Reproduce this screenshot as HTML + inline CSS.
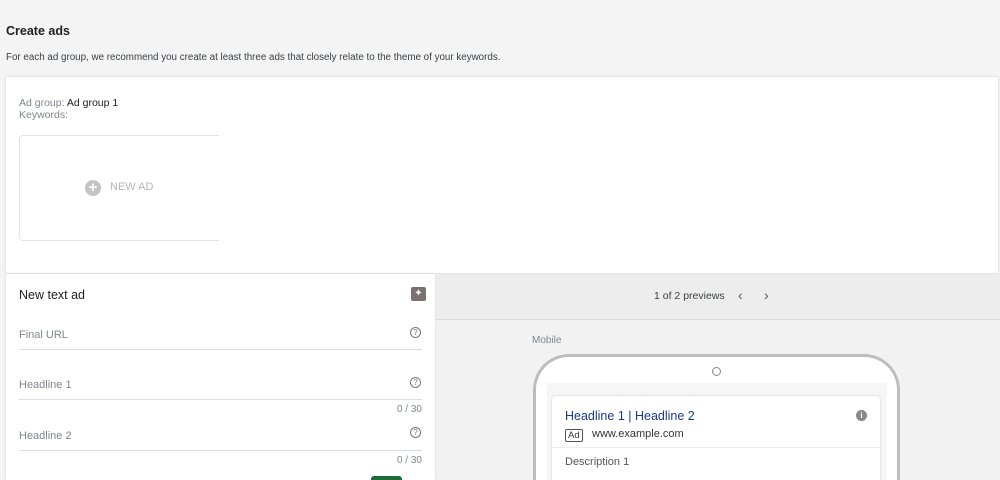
<!DOCTYPE html>
<html style="width:1000px;height:480px;overflow:hidden"><head><style>
*{margin:0;padding:0;box-sizing:border-box}
body{width:1000px;height:480px;overflow:hidden;background:#f4f4f4;font-family:"Liberation Sans",sans-serif;position:relative;color:#202124}
.a{position:absolute}
.lbl{font-size:11px;color:#80868b}
.line{height:1px;background:#dadce0;left:19px;width:403px}
.q{width:11px;height:11px;border:1.2px solid #777;border-radius:50%;font-size:8px;line-height:9px;text-align:center;color:#777;left:410px}
.cnt{font-size:10px;color:#80868b;right:578px}
</style></head><body>
<div class="a" style="left:6px;top:24px;font-size:12.5px;font-weight:bold;color:#202124">Create ads</div>
<div class="a" style="left:6px;top:52px;font-size:9.8px;color:#3c4043">For each ad group, we recommend you create at least three ads that closely relate to the theme of your keywords.</div>
<div class="a" style="left:6px;top:77px;width:992px;height:196px;background:#fff;box-shadow:0 0 2px #ccc"></div>
<div class="a" style="left:19px;top:97px;font-size:10.5px;color:#80868b;line-height:12px">Ad group: <span style="color:#202124">Ad group 1</span><br>Keywords:</div>
<div class="a" style="left:19px;top:135px;width:200px;height:106px;border:1px solid #e3e3e3;border-right:none;border-radius:4px 0 0 4px"></div>
<div class="a" style="left:85px;top:180px;width:16px;height:16px;border-radius:50%;background:#c4c4c4;color:#fff;font-size:15px;line-height:15px;text-align:center;font-weight:bold">+</div>
<div class="a" style="left:110px;top:181px;font-size:11px;color:#b5b5b5">NEW AD</div>
<div class="a" style="left:6px;top:274px;width:429px;height:206px;background:#fff;box-shadow:0 0 2px #ccc"></div>
<div class="a" style="left:19px;top:288px;font-size:12.5px;color:#202124">New text ad</div>
<div class="a" style="left:411px;top:287px;width:15px;height:14px;background:#7a7270;border-radius:2px;color:#fff;font-size:10px;text-align:center;line-height:14px">✦</div>
<div class="a lbl" style="left:19px;top:329px">Final URL</div><div class="a q" style="top:327px">?</div>
<div class="a line" style="top:349px"></div>
<div class="a lbl" style="left:19px;top:379px">Headline 1</div><div class="a q" style="top:377px">?</div>
<div class="a line" style="top:399px"></div>
<div class="a cnt" style="top:404px">0 / 30</div>
<div class="a lbl" style="left:19px;top:430px">Headline 2</div><div class="a q" style="top:427px">?</div>
<div class="a line" style="top:450px"></div>
<div class="a cnt" style="top:455px">0 / 30</div>
<div class="a" style="left:371px;top:476px;width:31px;height:4px;background:#1e6b3a;border-radius:3px 3px 0 0"></div>
<div class="a" style="left:436px;top:274px;width:564px;height:46px;background:#ededed;border-bottom:1px solid #ddd"></div>
<div class="a" style="left:436px;top:321px;width:564px;height:159px;background:#f2f2f2"></div>
<div class="a" style="left:654px;top:290px;font-size:10.5px;color:#3c4043">1 of 2 previews</div>
<div class="a" style="left:738px;top:287px;font-size:14px;color:#555">‹</div>
<div class="a" style="left:764px;top:287px;font-size:14px;color:#555">›</div>
<div class="a" style="left:532px;top:335px;font-size:10px;color:#80868b">Mobile</div>
<div class="a" style="left:533px;top:354px;width:367px;height:126px;border:3px solid #bdbdbd;border-bottom:none;border-radius:36px 36px 0 0;background:#fff"></div>
<div class="a" style="left:712px;top:367px;width:9px;height:9px;border:1px solid #888;border-radius:50%"></div>
<div class="a" style="left:547px;top:383px;width:340px;height:97px;background:#f6f6f6"></div>
<div class="a" style="left:552px;top:396px;width:328px;height:84px;background:#fff;border-radius:4px 4px 0 0;box-shadow:0 0 2px #ccc"></div>
<div class="a" style="left:565px;top:409px;font-size:12.5px;color:#1a3a8a">Headline 1 | Headline 2</div>
<div class="a" style="left:856px;top:410px;width:11px;height:11px;border-radius:50%;background:#888;color:#fff;font-size:8px;text-align:center;line-height:11px;font-weight:bold">i</div>
<div class="a" style="left:565px;top:429px;border:1px solid #555;border-radius:2px;font-size:9.5px;padding:0 2px;line-height:11px;color:#333">Ad</div>
<div class="a" style="left:592px;top:428px;font-size:11px;color:#333">www.example.com</div>
<div class="a" style="left:552px;top:447px;width:328px;height:1px;background:#eee"></div>
<div class="a" style="left:565px;top:456px;font-size:11px;color:#555">Description 1</div>
</body></html>
